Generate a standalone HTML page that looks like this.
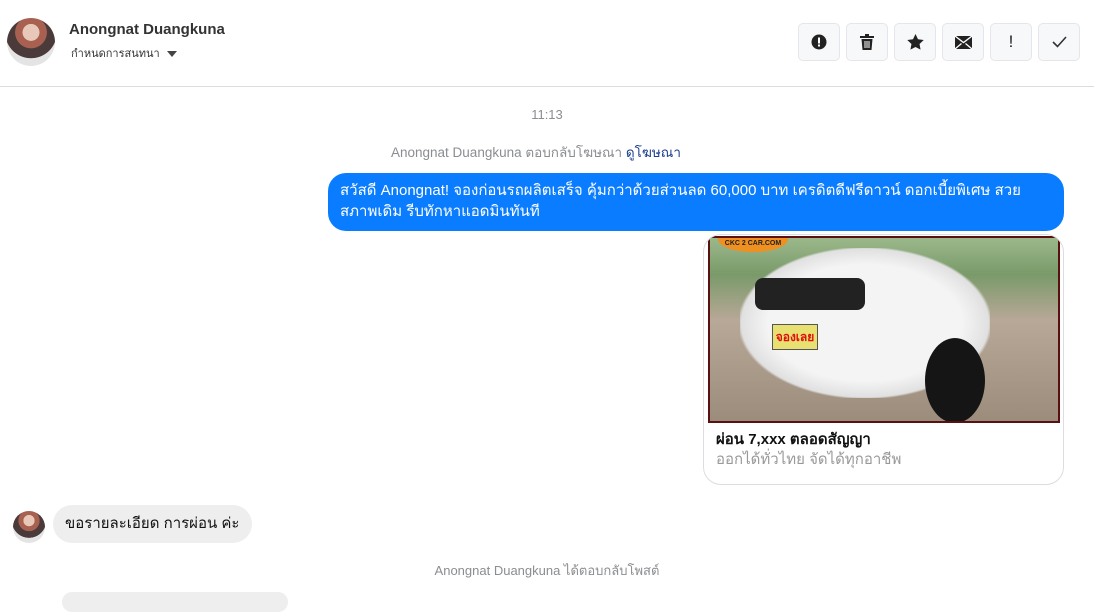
<!DOCTYPE html>
<html><head><meta charset="utf-8"><style>
*{box-sizing:border-box;margin:0;padding:0}
body{width:1094px;height:594px;overflow:hidden;background:#fff;font-family:"Liberation Sans","DejaVu Sans",sans-serif;position:relative}
.abs{position:absolute}
.btn{position:absolute;top:23px;width:42px;height:38px;border:1px solid #e4e6ea;border-radius:5px;background:#f7f8fa;display:flex;align-items:center;justify-content:center}
.av{border-radius:50%;background:radial-gradient(circle at 50% 30%,#e8c8b8 0 20%,#a86050 21% 38%,#4a3a3a 39% 62%,#e4e4e4 63%)}
</style></head><body>
<div class="abs av" style="left:7px;top:18px;width:48px;height:48px"></div>
<div class="abs" style="left:69px;top:21px;font-size:15px;font-weight:bold;color:#333">Anongnat Duangkuna</div>
<div class="abs" style="left:71px;top:44px;font-size:11px;color:#333">กำหนดการสนทนา <span style="display:inline-block;margin-left:4px;border-left:5px solid transparent;border-right:5px solid transparent;border-top:6px solid #444;vertical-align:middle"></span></div>

<div class="btn" style="left:798px"><svg width="16" height="16" viewBox="0 0 16 16"><circle cx="8" cy="8" r="7.5" fill="#222"/><rect x="7" y="3.5" width="2" height="6" fill="#fff"/><rect x="7" y="10.5" width="2" height="2" fill="#fff"/></svg></div>
<div class="btn" style="left:846px"><svg width="14" height="16" viewBox="0 0 14 16"><rect x="0" y="2" width="14" height="2" fill="#222"/><rect x="5" y="0" width="4" height="2" fill="#222"/><path d="M1.5 5h11l-1 11h-9z" fill="#222"/><rect x="4.5" y="7" width="1" height="7" fill="#fff"/><rect x="6.5" y="7" width="1" height="7" fill="#fff"/><rect x="8.5" y="7" width="1" height="7" fill="#fff"/></svg></div>
<div class="btn" style="left:894px"><svg width="17" height="16" viewBox="0 0 24 23"><path d="M12 0l3.6 7.5 8.2 1.1-6 5.7 1.5 8.2L12 18.6 4.7 22.5l1.5-8.2-6-5.7 8.2-1.1z" fill="#222"/></svg></div>
<div class="btn" style="left:942px"><svg width="17" height="13" viewBox="0 0 17 13"><rect width="17" height="13" fill="#222"/><path d="M0 0l8.5 6.5L17 0M0 13l6.5-5.5M17 13l-6.5-5.5" stroke="#fff" stroke-width="1.3" fill="none"/></svg></div>
<div class="btn" style="left:990px;font-size:17px;color:#222">!</div>
<div class="btn" style="left:1038px"><svg width="15" height="12" viewBox="0 0 15 12"><path d="M1 6l4.5 4.5L14 1" stroke="#333" stroke-width="1.6" fill="none"/></svg></div>
<div class="abs" style="left:0;top:86px;width:1094px;height:1px;background:#dcdde1"></div>

<div class="abs" style="left:0;width:1094px;top:107px;text-align:center;font-size:13px;color:#8a8d91">11:13</div>
<div class="abs" style="left:391px;top:141px;font-size:13.5px;color:#8a8d91">Anongnat Duangkuna ตอบกลับโฆษณา <span style="color:#1a3d8c">ดูโฆษณา</span></div>

<div class="abs" style="left:328px;top:173px;width:736px;height:58px;background:#0a7cff;border-radius:18px;color:#fff;font-size:15px;line-height:21px;padding:7px 30px 8px 12px">สวัสดี Anongnat! จองก่อนรถผลิตเสร็จ คุ้มกว่าด้วยส่วนลด 60,000 บาท เครดิตดีฟรีดาวน์ ดอกเบี้ยพิเศษ สวย สภาพเดิม รีบทักหาแอดมินทันที</div>

<div class="abs" style="left:703px;top:234px;width:361px;height:251px;border:1px solid #dcdde1;border-radius:18px;overflow:hidden">
 <div class="abs" style="left:4px;top:1px;width:352px;height:187px;background:#5a1010;padding:2px">
  <div style="width:100%;height:100%;background:linear-gradient(180deg,#9bb88a 0%,#7a9a6a 20%,#b8a898 45%,#9c8c7c 100%);position:relative;overflow:hidden">
   <div class="abs" style="left:30px;top:10px;width:250px;height:150px;background:radial-gradient(ellipse at 50% 50%,#f4f4f4 0 55%,#e0e0e0 70%,transparent 72%)"></div>
   <div class="abs" style="left:45px;top:40px;width:110px;height:32px;background:#222;border-radius:8px"></div>
   <div class="abs" style="left:215px;top:100px;width:60px;height:85px;background:#151515;border-radius:50%"></div>
   <div class="abs" style="left:8px;top:-12px;width:70px;height:26px;background:#f09020;border-radius:50%;font-size:7px;text-align:center;padding-top:14px;color:#222;font-weight:bold">CKC 2 CAR.COM</div>
   <div class="abs" style="left:62px;top:86px;width:46px;height:26px;background:#e8e070;border:1px solid #555;color:#e01010;font-weight:bold;font-size:12px;text-align:center;line-height:24px">จองเลย</div>
  </div>
 </div>
 <div class="abs" style="left:12px;top:192px;font-size:15px;font-weight:bold;color:#111">ผ่อน 7,xxx ตลอดสัญญา</div>
 <div class="abs" style="left:12px;top:212px;font-size:15px;color:#999">ออกได้ทั่วไทย จัดได้ทุกอาชีพ</div>
</div>

<div class="abs av" style="left:13px;top:511px;width:32px;height:32px"></div>
<div class="abs" style="left:53px;top:505px;height:38px;padding:0 12px;background:#eeeeee;border-radius:19px;font-size:15px;line-height:38px;color:#111">ขอรายละเอียด การผ่อน ค่ะ</div>
<div class="abs" style="left:0;width:1094px;top:560px;text-align:center;font-size:13px;color:#8a8d91">Anongnat Duangkuna ได้ตอบกลับโพสต์</div>
<div class="abs" style="left:62px;top:592px;width:226px;height:20px;background:#eee;border-radius:10px"></div>
</body></html>
